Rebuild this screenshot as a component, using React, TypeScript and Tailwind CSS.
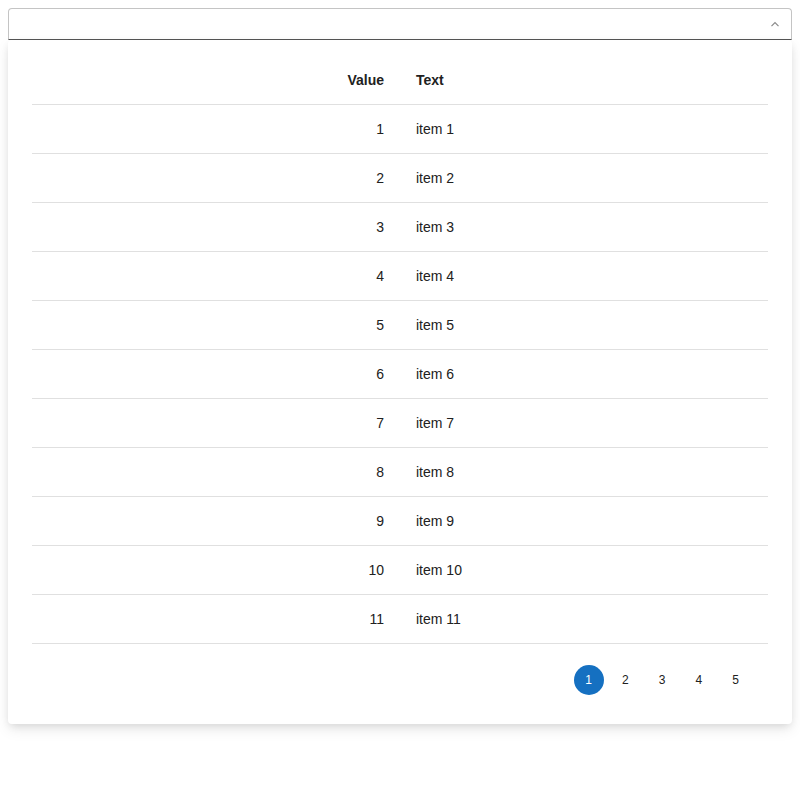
import React from 'react';

const rows = Array.from({ length: 11 }, (_, i) => i + 1);

export default function App() {
  return (
    <div className="w-[800px] h-[800px] bg-white p-2 font-['Liberation_Sans',_Arial,_sans-serif] text-[#212121]">
      <div className="h-8 border border-[#c4c4c4] border-b-[#555] rounded-t flex items-center justify-end pr-[11px]">
        <svg width="10" height="6" viewBox="0 0 10 6" fill="none" stroke="#8a8a8a" strokeWidth="1.2">
          <path d="M1.5 5.2 L5 1.7 L8.5 5.2" />
        </svg>
      </div>
      <div className="bg-white rounded shadow-[0_3px_8px_-2px_rgba(0,0,0,0.12),0_6px_14px_0_rgba(0,0,0,0.08)] pt-4 px-6 pb-[29px]">
        <table className="w-full border-collapse text-sm table-fixed">
          <thead>
            <tr className="border-b border-[#e0e0e0]">
              <th className="h-12 px-4 text-right font-bold">Value</th>
              <th className="h-12 px-4 text-left font-bold">Text</th>
            </tr>
          </thead>
          <tbody>
            {rows.map(n => (
              <tr key={n} className="border-b border-[#e0e0e0]">
                <td className="h-[49px] px-4 text-right">{n}</td>
                <td className="h-[49px] px-4 text-left">item {n}</td>
              </tr>
            ))}
          </tbody>
        </table>
        <div className="flex justify-end gap-[6.75px] pr-[17.5px] mt-[21px] text-xs">
          {[1, 2, 3, 4, 5].map(p => (
            <button
              key={p}
              className={p === 1
                ? 'w-[30px] h-[30px] rounded-full bg-[#1570c1] text-white flex items-center justify-center'
                : 'w-[30px] h-[30px] rounded-full text-[#212121] flex items-center justify-center'}
            >
              {p}
            </button>
          ))}
        </div>
      </div>
    </div>
  );
}
